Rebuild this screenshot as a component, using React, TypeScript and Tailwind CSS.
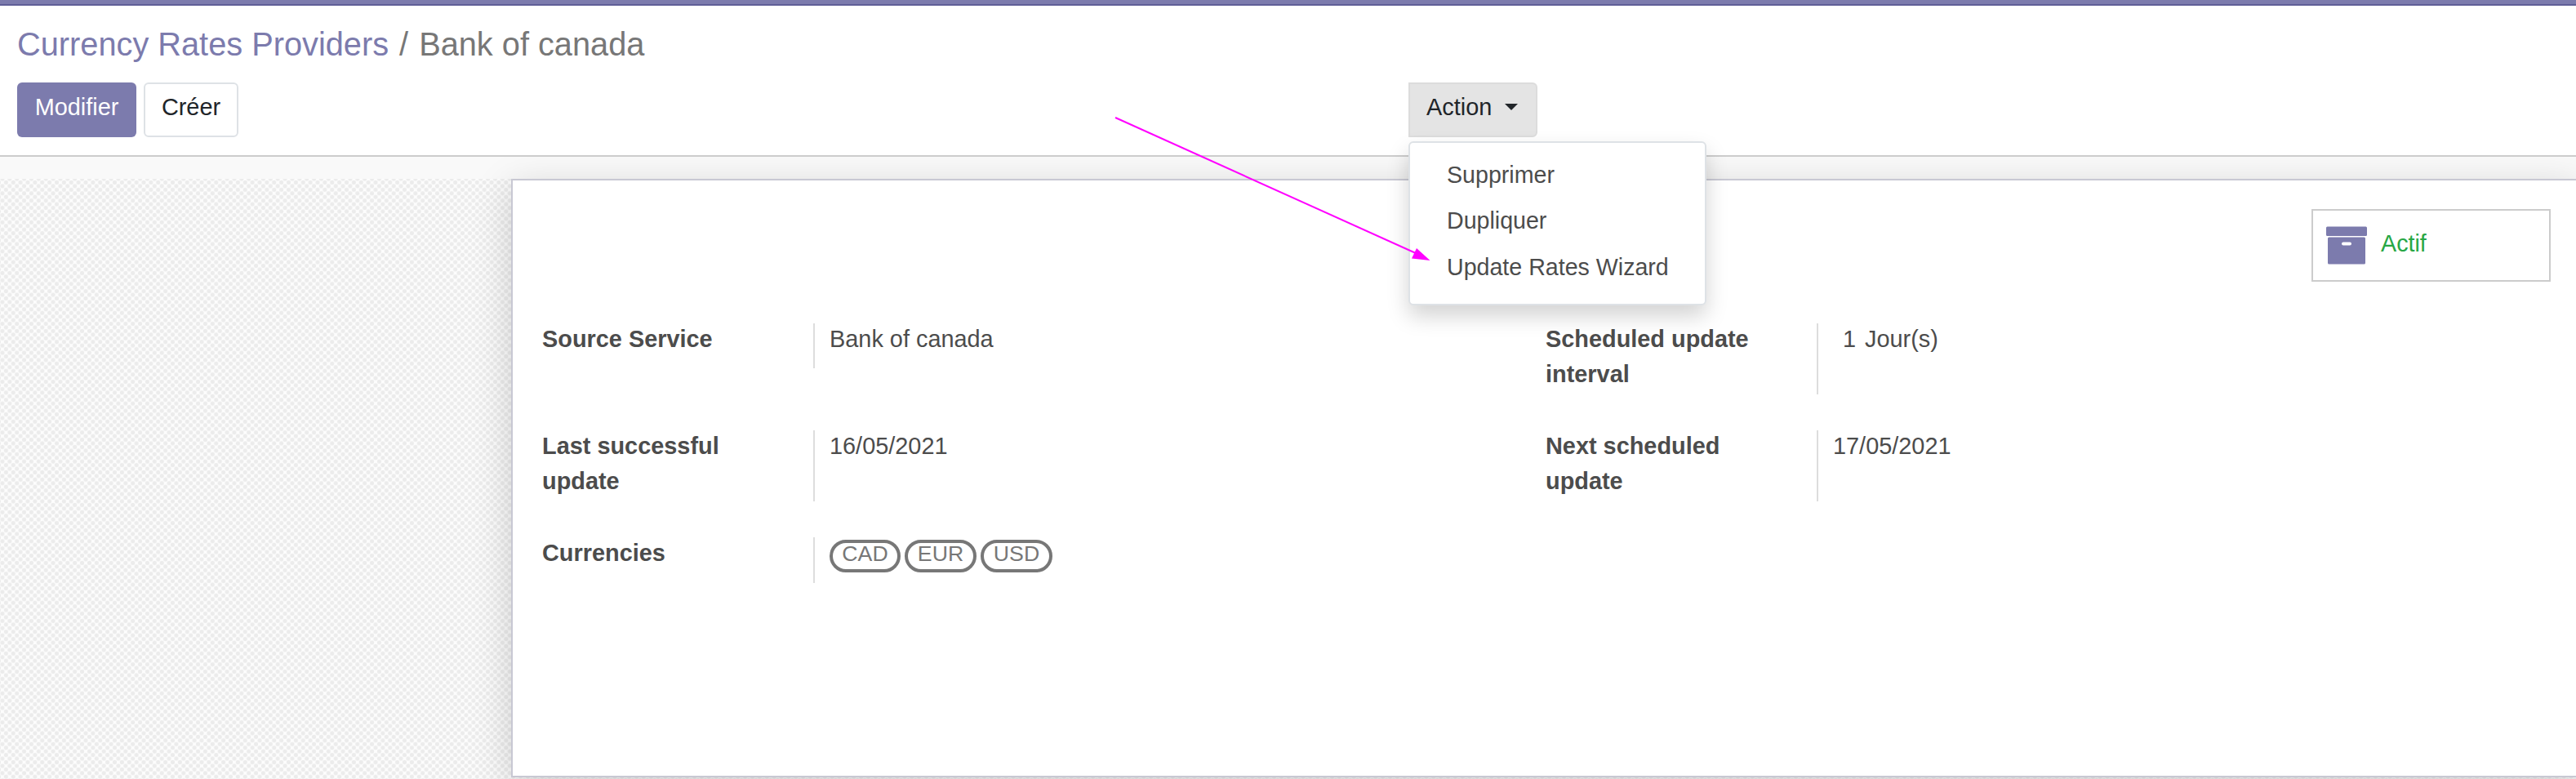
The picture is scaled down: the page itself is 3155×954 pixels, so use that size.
import React from "react";

const checker =
  "bg-[#fdfdfd] [background-image:radial-gradient(circle,#ebebeb_0,#ececec_34%,transparent_50%),radial-gradient(circle,#ebebeb_0,#ececec_34%,transparent_50%)] [background-size:8.89px_8.89px] [background-position:-1.5px_-4.4px,2.945px_0.045px]";

function Row({ label, h, children }: { label: React.ReactNode; h: string; children: React.ReactNode }) {
  return (
    <div className={`flex ${h}`}>
      <div className="-mt-0.5 w-[332px] shrink-0 font-bold">{label}</div>
      <div className="flex border-l-2 border-[#dddddd] pl-[18px]">
        <div className="-mt-0.5 flex">{children}</div>
      </div>
    </div>
  );
}

function Tag({ children, w }: { children: string; w: string }) {
  return (
    <span className={`flex h-10 items-center justify-center rounded-[20px] border-4 border-[#777777] pb-[6px] text-[26.67px] leading-none text-[#777777] ${w}`}>
      {children}
    </span>
  );
}

export default function App() {
  return (
    <div className="relative flex h-[954px] w-[3155px] flex-col overflow-hidden bg-white font-['Liberation_Sans',Arial,sans-serif] text-[28.89px] leading-[43.33px] text-[#4c4c4c]">
      <div className="h-[7px] shrink-0 border-b-2 border-[#5f5e97] bg-[#7c7bad]" />
      <header className="flex h-[185px] shrink-0 flex-col border-b-2 border-[#cccccc] px-[21px]">
        <div className="flex h-[94px] items-center whitespace-pre pt-px text-[39.75px] text-[#777777]">
          <span className="text-[#7c7bad]">Currency Rates Providers</span>
          <span className="pl-[13px] pr-[13px]">/</span>
          <span>Bank of canada</span>
        </div>
        <div className="flex h-[67px]">
          <button className="w-[146px] rounded-[6px] bg-[#7c7bad] pb-[6px] text-white">Modifier</button>
          <button className="ml-[9px] w-[116px] rounded-[6px] border-2 border-[#dee2e6] pb-[6px] text-[#212529]">Créer</button>
          <div className="relative ml-[1433px]">
            <button className="flex h-[67px] w-[158px] items-center rounded-r-[6px] border-2 border-[#dcdcdc] bg-[#e4e4e4] pb-[6px] pl-5 text-[#212529]">
              Action
              <svg className="ml-[16px] mb-[2px]" width="16" height="8" viewBox="0 0 16 8">
                <path d="M0 0H16L8 8Z" fill="#212529" />
              </svg>
            </button>
            <div className="absolute left-0 top-[72px] z-10 flex h-[201px] w-[365px] flex-col rounded-[6px] border-2 border-[#dee2e6] bg-white pl-[45px] pt-[11px] text-[28.6px] leading-[56.3px] shadow-[0_13px_27px_rgba(0,0,0,0.175)]">
              <div>Supprimer</div>
              <div>Dupliquer</div>
              <div>Update Rates Wizard</div>
            </div>
          </div>
        </div>
      </header>
      <main className="relative flex grow flex-col overflow-hidden bg-[#f9f9f9] pt-[27px]">
        <div className={`flex grow pl-[626px] ${checker}`}>
          <section className="h-[733px] w-[2534px] shrink-0 border-2 border-[#c8c8d3] bg-white shadow-[0_11px_44px_rgba(0,0,0,0.17)]">
            <div className="ml-[2203px] mt-[35px] flex h-[89px] w-[293px] items-center border-2 border-[#cccccc]">
              <svg className="ml-[16px]" width="50" height="47" viewBox="0 0 50 47" fill="#7c7bad">
                <rect y="0.5" width="50" height="11.5" rx="1.5" />
                <path fillRule="evenodd" d="M3.500 13.500H46.500Q48 13.500 48 15V45Q48 46.500 46.500 46.500H3.500Q2 46.500 2 45V15Q2 13.500 3.500 13.500ZM21 19.500A2 2 0 0 0 21 23.500H29A2 2 0 0 0 29 19.500Z" />
              </svg>
              <span className="ml-[17px] pb-[3px] text-[28.7px] text-[#28a745]">Actif</span>
            </div>
            <div className="mt-[51px] flex pl-[36px]">
              <div className="flex w-[1229px] shrink-0 flex-col">
                <Row h="h-[55px] mb-[76px]" label="Source Service">Bank of canada</Row>
                <Row h="h-[87px] mb-[44px]" label={<>Last successful<br />update</>}>16/05/2021</Row>
                <Row h="h-[56px]" label="Currencies">
                  <div className="flex gap-[5px] pt-[5px]">
                    <Tag w="w-[87px]">CAD</Tag>
                    <Tag w="w-[88px]">EUR</Tag>
                    <Tag w="w-[88px]">USD</Tag>
                  </div>
                </Row>
              </div>
              <div className="flex flex-col">
                <Row h="h-[87px] mb-[44px]" label={<>Scheduled update<br />interval</>}>
                  <span className="pl-[12px]">1</span>
                  <span className="pl-[11px]">Jour(s)</span>
                </Row>
                <Row h="h-[87px]" label={<>Next scheduled<br />update</>}>17/05/2021</Row>
              </div>
            </div>
          </section>
        </div>
      </main>
      <svg className="absolute left-[1360px] top-[136px] z-20" width="400" height="190" viewBox="0 0 400 190">
        <path d="M6 8L375 174.500" stroke="#ff00ff" strokeWidth="2" fill="none" />
        <path d="M391.500 183L375 168L369 180.500Z" fill="#ff00ff" />
      </svg>
    </div>
  );
}
